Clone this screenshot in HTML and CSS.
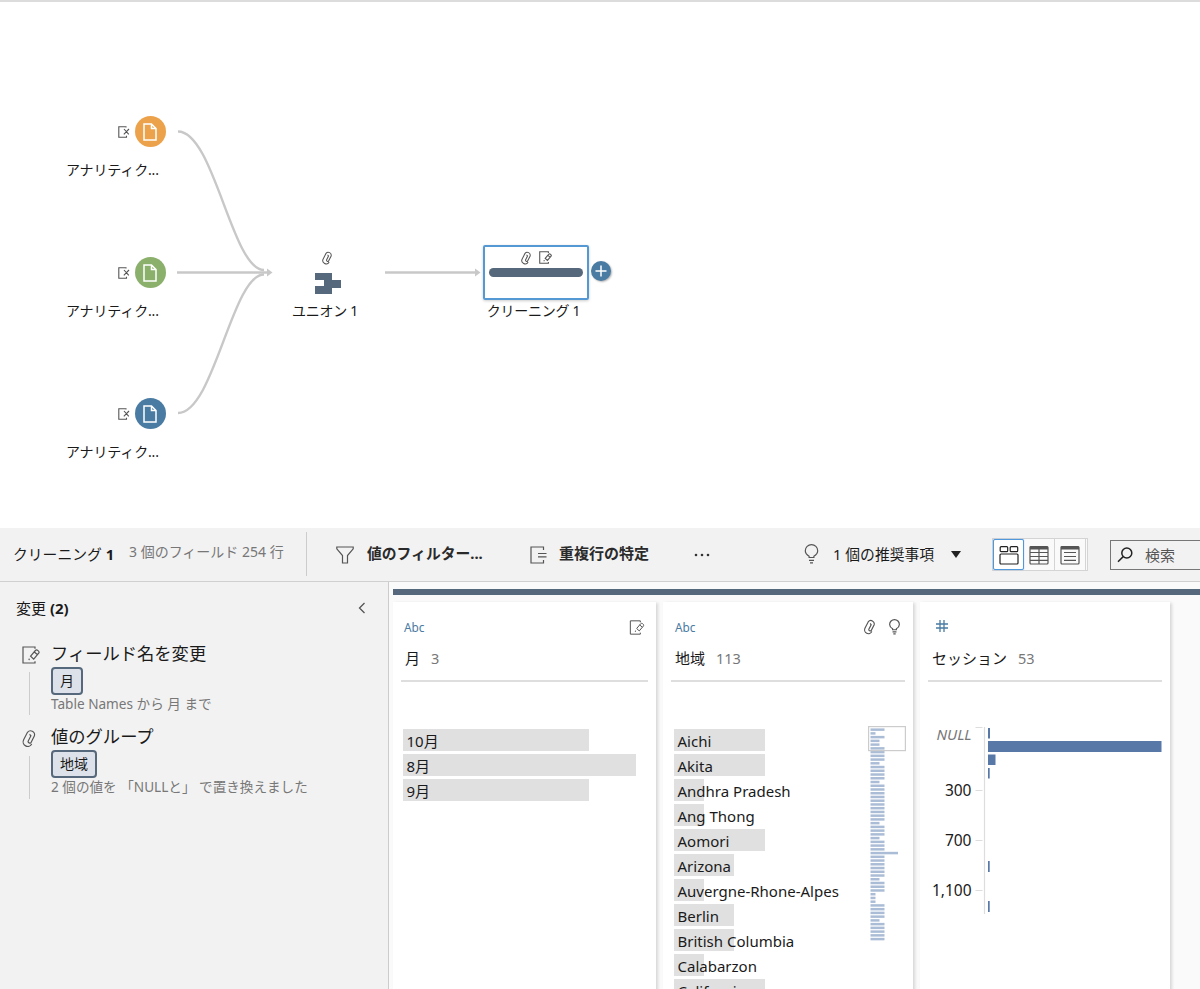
FILE: index.html
```html
<!DOCTYPE html>
<html lang="ja">
<head>
    <meta charset="UTF-8">
    <meta name="viewport" content="width=device-width, initial-scale=1.0">
    <title>クリーニング 1</title>
    <link rel="stylesheet" href="styles.css">
</head>
<body>
    <svg class="symbols" width="0" height="0">
        <symbol id="file" viewBox="0 0 14 18">
            <path d="M1 1h7.5l4.5 4.5V17H1z M8.5 1v4.5H13"/>
        </symbol>
        <symbol id="remove" viewBox="0 0 12 12">
            <path d="M8 1.500V.8H.8v10.400h7.700V9.800 M6 3l4.800 5.400 M11 3L5.800 8.400"/>
        </symbol>
        <symbol id="clip" viewBox="0 0 14 18">
            <path transform="rotate(27 7 9)" d="M7 5.500v6.700a2 2 0 0 0 3 0V4.600a3.800 3.800 0 0 0-7.400 0v8a4.300 4.300 0 0 0 8.600 0M7 12.200V6.500a1.900 1.900 0 0 0-1.800-1"/>
        </symbol>
        <symbol id="edit" viewBox="0 0 18 18">
            <path d="M13 2.800V1H1v16h12v-1.800 M8.600 10.200L13.400 4.500c1.300-1.500 4.600.9 3.300 2.700l-5 5.900z M12.300 6l3 2.500 M7 14.200l.3-1.500"/>
        </symbol>
        <symbol id="bulb" viewBox="0 0 14 20">
            <path d="M4.600 13.500v-1.300C2.200 10.800.8 9.200.8 6.800a6.200 6.200 0 0 1 12.400 0c0 2.400-1.400 4-3.800 5.400v1.300z M4.500 16.300h5 M5.500 18.800h3"/>
        </symbol>
    </svg>

    <div class="canvas">
        <svg class="links" width="700" height="500" viewBox="0 0 700 500">
            <path d="M178 131.500C214 131.500 232 270 264 270"/>
            <path d="M178 413C214 413 232 274.500 264 274.500"/>
            <path d="M177 272.500H268"/>
            <path d="M385 272.500H476"/>
            <path class="arrow" d="M267 268.500l5.500 4-5.500 4z M475 268.500l5.500 4-5.500 4z"/>
        </svg>

        <div class="node input-1">
            <svg class="remove"><use href="#remove"/></svg>
            <span class="dot orange"><svg><use href="#file"/></svg></span>
            <span class="label">アナリティク...</span>
        </div>
        <div class="node input-2">
            <svg class="remove"><use href="#remove"/></svg>
            <span class="dot green"><svg><use href="#file"/></svg></span>
            <span class="label">アナリティク...</span>
        </div>
        <div class="node input-3">
            <svg class="remove"><use href="#remove"/></svg>
            <span class="dot blue"><svg><use href="#file"/></svg></span>
            <span class="label">アナリティク...</span>
        </div>

        <div class="union">
            <svg class="clip-small"><use href="#clip"/></svg>
            <svg class="union-icon" viewBox="0 0 26 21"><path d="M0 0h17v7h9v8h-9v6H0v-8h9V7H0z"/></svg>
            <span class="label">ユニオン 1</span>
        </div>

        <div class="clean">
            <div class="clean-box">
                <div class="clean-icons">
                    <svg class="clip-small"><use href="#clip"/></svg>
                    <svg class="edit-small"><use href="#edit"/></svg>
                </div>
                <div class="clean-bar"></div>
            </div>
            <span class="label">クリーニング 1</span>
        </div>
        <svg class="plus" viewBox="0 0 20 20"><path d="M10 4.500v11M4.500 10h11"/></svg>
    </div>

    <div class="toolbar">
        <div class="step">
            <span class="step-name">クリーニング <b>1</b></span>
            <span class="step-info">3 個のフィールド</span>
            <span class="step-rows">254 行</span>
        </div>
        <svg class="funnel" viewBox="0 0 18 18"><path d="M.8 1h16.400v1.800L11.500 9.500V17h-5V9.500L.8 2.800z"/></svg>
        <b class="filter-text">値のフィルター...</b>
        <svg class="dup" viewBox="0 0 17 18"><path d="M13.500 4V1H1v16h12.500v-3 M8 7.500h8.500 M8 10.800h8.500"/></svg>
        <b class="dup-text">重複行の特定</b>
        <svg class="more" viewBox="0 0 16 4"><circle cx="2" cy="2" r="1.300"/><circle cx="8" cy="2" r="1.300"/><circle cx="14" cy="2" r="1.300"/></svg>
        <svg class="bulb-big"><use href="#bulb"/></svg>
        <span class="recommend">1 個の推奨事項</span>
        <svg class="caret" viewBox="0 0 10 7"><path d="M0 0h10L5 7z"/></svg>
        <div class="views">
            <span class="view active"><svg viewBox="0 0 20 20"><rect x="1.200" y="1.700" width="7.500" height="5" rx="1"/><rect x="11.200" y="1.700" width="7.500" height="5" rx="1"/><rect x="1" y="9" width="18" height="10" rx="1"/></svg></span>
            <span class="view"><svg viewBox="0 0 20 20"><rect x="1" y="1.500" width="18" height="17.500" rx="1"/><path d="M1 3h18" stroke-width="3"/><path d="M1 7.500h18M1 11.500h18M1 15.300h18M10 4v15"/></svg></span>
            <span class="view"><svg viewBox="0 0 20 20"><rect x="1" y="1.500" width="18" height="17.500" rx="1"/><path d="M1 3h18" stroke-width="3"/><path d="M4 7.500h12M4 11.500h12M4 15.300h12"/></svg></span>
        </div>
        <div class="search">
            <svg viewBox="0 0 16 16"><circle cx="9.800" cy="6" r="5"/><path d="M6.200 9.600L1 14.800"/></svg>
            <span>検索</span>
        </div>
    </div>

    <div class="workspace">
        <div class="changes">
            <div class="changes-head">
                <span>変更 <b>(2)</b></span>
                <svg viewBox="0 0 8 12"><path d="M6.500 1L1.500 6l5 5"/></svg>
            </div>
            <div class="change">
                <div class="change-side"><svg class="edit-icon"><use href="#edit"/></svg></div>
                <div class="change-body">
                    <span class="change-title">フィールド名を変更</span>
                    <span class="chip">月</span>
                    <span class="change-note">Table Names から 月 まで</span>
                </div>
            </div>
            <div class="change">
                <div class="change-side"><svg class="clip-icon"><use href="#clip"/></svg></div>
                <div class="change-body">
                    <span class="change-title">値のグループ</span>
                    <span class="chip">地域</span>
                    <span class="change-note">2 個の値を 「NULLと」 で置き換えました</span>
                </div>
            </div>
        </div>

        <div class="profile">
            <div class="profile-bar"></div>
            <div class="cards">
                <div class="card month">
                    <div class="card-type"><span>Abc</span><svg class="edit-card"><use href="#edit"/></svg></div>
                    <div class="card-name">月<span>3</span></div>
                    <div class="values">
                        <div class="value"><i style="width:186px"></i><span>10月</span></div>
                        <div class="value"><i style="width:233px"></i><span>8月</span></div>
                        <div class="value"><i style="width:186px"></i><span>9月</span></div>
                    </div>
                </div>
                <div class="card region">
                    <div class="card-type"><span>Abc</span><svg class="clip-card"><use href="#clip"/></svg><svg class="bulb-card"><use href="#bulb"/></svg></div>
                    <div class="card-name">地域<span>113</span></div>
                    <div class="values">
                        <div class="value"><i style="width:91px"></i><span>Aichi</span></div>
                        <div class="value"><i style="width:91px"></i><span>Akita</span></div>
                        <div class="value"><i style="width:30px"></i><span>Andhra Pradesh</span></div>
                        <div class="value"><i style="width:30px"></i><span>Ang Thong</span></div>
                        <div class="value"><i style="width:91px"></i><span>Aomori</span></div>
                        <div class="value"><i style="width:60px"></i><span>Arizona</span></div>
                        <div class="value"><i style="width:30px"></i><span>Auvergne-Rhone-Alpes</span></div>
                        <div class="value"><i style="width:60px"></i><span>Berlin</span></div>
                        <div class="value"><i style="width:60px"></i><span>British Columbia</span></div>
                        <div class="value"><i style="width:30px"></i><span>Calabarzon</span></div>
                        <div class="value"><i style="width:91px"></i><span>California</span></div>
                    </div>
                    <svg class="minimap" width="38" height="216" viewBox="0 0 38 216"></svg>
                </div>
                <div class="card session">
                    <div class="card-type"><svg class="hash" viewBox="0 0 12 12"><path d="M4 0v12M8 0v12M0 4h12M0 8h12"/></svg></div>
                    <div class="card-name">セッション<span>53</span></div>
                    <svg class="histogram" width="250" height="200" viewBox="920 722 250 200">
                        <path class="axis" d="M984.500 727V914M975.500 727.500h7M975.500 790.500h7M975.500 840.500h7M975.500 890.500h7"/>
                        <g class="bars">
                            <rect x="988" y="728" width="2" height="10.500"/>
                            <rect x="988" y="741" width="173.500" height="11"/>
                            <rect x="988" y="754.500" width="7.500" height="10.500"/>
                            <rect x="988" y="768" width="1.700" height="10.500"/>
                            <rect x="988" y="861" width="1.700" height="11"/>
                            <rect x="988" y="901" width="1.700" height="11"/>
                        </g>
                        <g class="ticks">
                            <text class="null" x="971.500" y="739.500">NULL</text>
                            <text x="971.500" y="796">300</text>
                            <text x="971.500" y="846">700</text>
                            <text x="971.500" y="896">1,100</text>
                        </g>
                    </svg>
                </div>
            </div>
        </div>
    </div>

    <script src="script.js"></script>
</body>
</html>
```

FILE: styles.css
```css
* {
    box-sizing: border-box;
}

body {
    margin: 0;
    width: 1200px;
    height: 989px;
    overflow: hidden;
    background-color: #fff;
    color: #1a1a1a;
    font-family: "Noto Sans", "Noto Sans CJK JP", sans-serif;
    font-size: 14px;
    line-height: 20px;
    white-space: nowrap;
}

svg {
    display: block;
    flex: none;
    fill: none;
    stroke: #555;
    stroke-width: 1.2;
}

.symbols {
    position: absolute;
}

/* Flow canvas */
.canvas {
    position: relative;
    height: 528px;
    border-top: 2px solid #dcdcdc;
}

.links {
    position: absolute;
    left: 0;
    top: -2px;
    stroke: #c8c8c8;
    stroke-width: 2.4;
}

.arrow {
    fill: #c8c8c8;
    stroke: none;
}

.node, .union, .clean, .plus {
    position: absolute;
}

.node {
    left: 66px;
    width: 100px;
    display: flex;
    flex-wrap: wrap;
    justify-content: flex-end;
    align-items: center;
    column-gap: 5px;
    row-gap: 13px;
}

.input-1 { top: 114px; }
.input-2 { top: 255px; }
.input-3 { top: 396px; }

.node .label {
    width: 100px;
    letter-spacing: -0.15px;
}

.remove {
    width: 12px;
    height: 12px;
    stroke-width: 1.1;
}

.dot {
    display: flex;
    align-items: center;
    justify-content: center;
    width: 31px;
    height: 31px;
    border-radius: 50%;
}

.dot svg {
    width: 14px;
    height: 18px;
    margin-right: 1px;
    stroke: #fff;
    stroke-width: 1.5;
}

.orange { background-color: #eca24a; }
.green { background-color: #8bb06c; }
.blue { background-color: #4a7ba2; }

.label {
    font-size: 14px;
    letter-spacing: -0.25px;
}

.union {
    left: 285px;
    top: 249px;
    width: 80px;
    display: flex;
    flex-direction: column;
    align-items: center;
}

.clip-small {
    width: 13px;
    height: 14px;
    stroke-width: 1.3;
}

.union .clip-small {
    margin-left: 5px;
}

.union-icon {
    width: 26px;
    height: 21px;
    margin: 8px 0 7px 6px;
    fill: #56687c;
    stroke: none;
}

.clean {
    left: 483px;
    top: 243px;
    width: 106px;
    display: flex;
    flex-direction: column;
    align-items: center;
    gap: 1px;
}

.clean .label {
    margin-right: 5px;
}

.clean-box {
    width: 106px;
    height: 55px;
    padding: 4px;
    border: 2px solid #5599d4;
    border-radius: 2px;
    box-shadow: 0 1px 3px rgba(0,0,0,0.2);
}

.clean-icons {
    display: flex;
    justify-content: center;
    gap: 6px;
    height: 17px;
}

.edit-small {
    width: 13px;
    height: 13px;
    stroke-width: 1.5;
}

.clean-bar {
    height: 9px;
    border-radius: 5px;
    background-color: #56687c;
}

.plus {
    left: 591px;
    top: 259px;
    width: 20px;
    height: 20px;
    border-radius: 50%;
    background-color: #4a7ba2;
    stroke: #fff;
    stroke-width: 1.5;
    box-shadow: 1px 1px 2px rgba(0,0,0,0.3);
}

/* Toolbar */
.toolbar {
    display: flex;
    align-items: center;
    height: 54px;
    padding: 0 0 2px 13px;
    background-color: #f2f2f2;
    border-bottom: 1px solid #d0d0d0;
}

.toolbar > * {
    flex: none;
}

.step {
    display: flex;
    width: 294px;
    height: 44px;
    padding-top: 10px;
    border-right: 1px solid #ccc;
}

.step-name {
    width: 116px;
    padding-top: 2px;
    font-size: 14.8px;
}

.step-info {
    width: 113px;
    color: #777;
}

.step-rows {
    color: #777;
}

.funnel {
    width: 18px;
    height: 18px;
    margin: 2px 13px 0 29px;
}

.filter-text {
    width: 163px;
    margin-top: -2px;
    font-size: 14.8px;
    color: #2a2a2a;
}

.dup {
    width: 17px;
    height: 18px;
    margin: 2px 12px 0 0;
}

.dup-text {
    width: 135px;
    margin-top: -2px;
    font-size: 15px;
    color: #2a2a2a;
}

.more {
    width: 16px;
    height: 4px;
    margin: 3px 94px 0 0;
    fill: #333;
    stroke: none;
}

.bulb-big {
    width: 15px;
    height: 20px;
    margin-right: 14px;
}

.recommend {
    width: 118px;
    font-size: 14.8px;
}

.caret {
    width: 10px;
    height: 7px;
    margin-top: 2px;
    fill: #222;
    stroke: none;
}

.views {
    display: flex;
    height: 33px;
    width: 96px;
    margin: 2px 22px 0 31px;
    border: 1px solid #d4d4d4;
    background-color: #fafafa;
}

.view {
    display: flex;
    align-items: center;
    justify-content: center;
    width: 31px;
    border-right: 1px solid #d4d4d4;
}

.view svg {
    width: 20px;
    height: 20px;
}

.active {
    background-color: #fff;
    border: 1px solid #4f98dc;
    border-radius: 2px;
    box-shadow: 0 0 1px #4f98dc;
}

.active svg {
    stroke: #222;
}

.search {
    display: flex;
    align-items: center;
    width: 120px;
    height: 30px;
    margin-top: 2px;
    padding-left: 6px;
    border: 1px solid #777;
    gap: 12px;
    font-size: 15px;
    color: #555;
}

.search svg {
    width: 16px;
    height: 16px;
    stroke: #222;
    stroke-width: 1.5;
}

/* Changes pane */
.workspace {
    display: flex;
    height: 407px;
}

.changes {
    width: 389px;
    padding: 16px 22px 0 16px;
    background-color: #f2f2f2;
    border-right: 1px solid #ccc;
}

.changes-head {
    display: flex;
    justify-content: space-between;
    align-items: center;
    height: 20px;
    margin-bottom: 24px;
    font-size: 15px;
}

.changes-head svg {
    width: 8px;
    height: 12px;
    stroke-width: 1.3;
}

.change {
    display: flex;
    height: 83px;
}

.change-side {
    width: 35px;
    padding: 4px 0 0 6px;
}

.change-side::after {
    content: "";
    display: block;
    width: 1px;
    height: 43px;
    margin: 8px 0 0 7px;
    background-color: #ccc;
}

.edit-icon {
    width: 18px;
    height: 18px;
}

.clip-icon {
    width: 15px;
    height: 19px;
    stroke-width: 1.1;
}

.change-body {
    display: flex;
    flex-direction: column;
    align-items: flex-start;
}

.change-title {
    height: 25px;
    font-size: 17.3px;
    line-height: 23px;
}

.chip {
    height: 28px;
    padding: 0 7px;
    border: 2px solid #56687c;
    border-radius: 4px;
    background-color: #dde2ea;
    line-height: 24px;
}

.change-note {
    margin-top: -1px;
    font-size: 13.6px;
    color: #777;
}

/* Profile cards */
.profile {
    width: 811px;
    padding: 7px 0 0 4px;
    background-color: #fafafb;
}

.profile-bar {
    height: 6px;
    background-color: #56687c;
}

.cards {
    display: flex;
    gap: 7px;
    height: 394px;
    padding-top: 7px;
}

.card {
    position: relative;
    height: 400px;
    padding: 15px 8px 0;
    background-color: #fff;
    box-shadow: 2px 1px 3px rgba(0,0,0,0.14);
}

.month { width: 263px; }
.region { width: 250px; }
.session { width: 250px; }

.card-type {
    display: flex;
    align-items: center;
    height: 20px;
    padding: 0 3px;
    font-size: 11.8px;
    color: #4a7ba2;
}

.region .card-type {
    padding-left: 4px;
}

.card-type span {
    margin-right: auto;
}

.edit-card {
    width: 16px;
    height: 15px;
}

.clip-card {
    width: 14px;
    height: 16px;
    margin-right: 12px;
    stroke-width: 1.3;
}

.bulb-card {
    width: 11px;
    height: 16px;
    margin-right: 2px;
    stroke-width: 1.5;
}

.hash {
    width: 12px;
    height: 12px;
    margin: -2px 0 0 5px;
    stroke: #4a7ba2;
    stroke-width: 1.3;
}

.card-name {
    height: 45px;
    padding: 11px 3px 0 4px;
    border-bottom: 2px solid #dedede;
    font-size: 15px;
}

.card-name span {
    margin-left: 11px;
    color: #777;
    font-size: 14.5px;
}

.values {
    margin: 47px 0 0 2px;
}

.region .values {
    margin-left: 3px;
}

.value {
    position: relative;
    height: 25px;
    padding: 2px 0 0 3.5px;
    font-size: 15px;
}

.value i {
    position: absolute;
    left: 0;
    top: 0;
    height: 22px;
    background-color: #e0e0e0;
}

.value span {
    position: relative;
}

.minimap {
    position: absolute;
    left: 205px;
    top: 124px;
}

.minimap .bar {
    fill: #abbdd6;
    stroke: none;
}

.minimap .window {
    stroke: #ccc;
    stroke-width: 1.2;
}

.histogram {
    margin: 40px 0 0 -8px;
}

.histogram .axis {
    stroke: #ddd;
}

.bars {
    fill: #5878a8;
    stroke: none;
}

.ticks {
    fill: #1a1a1a;
    stroke: none;
    font-size: 15.5px;
    text-anchor: end;
}

.ticks .null {
    fill: #777;
    font-size: 15px;
    font-style: italic;
}
```

FILE: script.js
```javascript
const full = 14;
const widths = { 1: 5, 3: 9, 4: 9, 9: 9, 14: 9, 25: 9, 29: 9, 33: 27.5, 40: 9, 44: 5, 45: 5, 46: 5, 51: 9 };
const minimap = document.querySelector('.minimap');

function addRect(cls, x, y, width, height) {
    const rect = document.createElementNS('http://www.w3.org/2000/svg', 'rect');
    rect.setAttribute('class', cls);
    rect.setAttribute('x', x);
    rect.setAttribute('y', y);
    rect.setAttribute('width', width);
    rect.setAttribute('height', height);
    minimap.appendChild(rect);
}

for (let i = 0; i < 57; i++) {
    addRect('bar', 2.5, 2.4 + i * 3.74, widths[i] || full, 2.5);
}
addRect('window', 0.6, 0.6, 36.8, 24);
```
